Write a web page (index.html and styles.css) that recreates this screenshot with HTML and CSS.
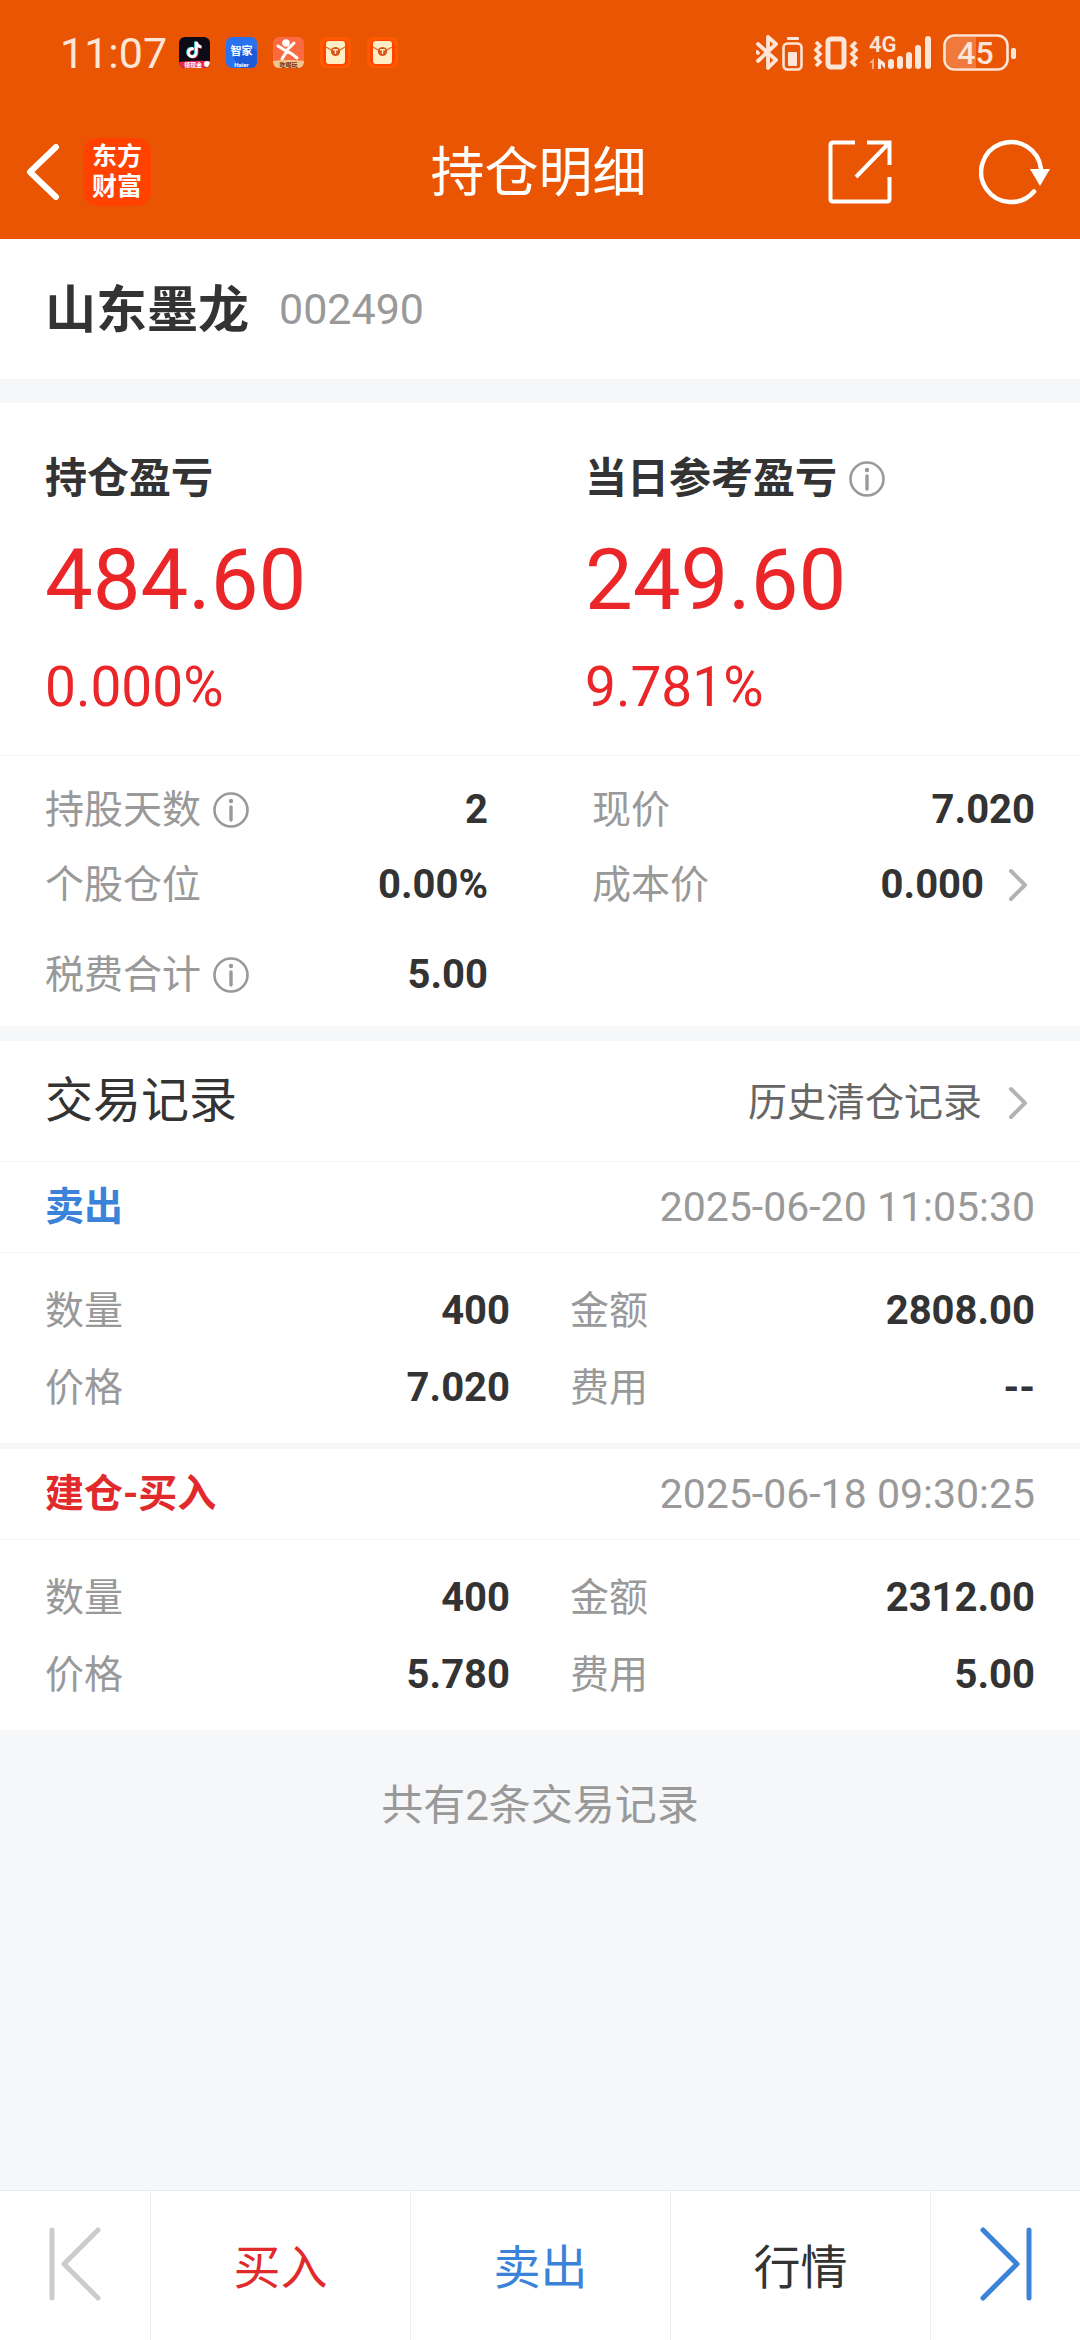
FILE: index.html
```html
<!DOCTYPE html>
<html lang="zh-CN">
<head>
<meta charset="utf-8">
<meta name="viewport" content="width=device-width, initial-scale=1">
<title>持仓明细</title>
<link rel="stylesheet" href="styles.css">
</head>
<body>
<svg class="defs" aria-hidden="true">
  <symbol id="info" viewBox="0 0 36 36">
    <circle cx="18" cy="18" r="16.5" fill="none" stroke="#999" stroke-width="2.6"/>
    <circle cx="18" cy="9" r="2.2" fill="#999"/>
    <path d="M18 15v13" stroke="#999" stroke-width="3.4" stroke-linecap="round"/>
  </symbol>
  <symbol id="chevron" viewBox="0 0 20 34">
    <path d="M3 3l14 14L3 31" fill="none" stroke="#b3b3b3" stroke-width="4" stroke-linecap="round" stroke-linejoin="round"/>
  </symbol>
  <symbol id="envelope" viewBox="0 0 31 31">
    <rect width="31" height="31" rx="6" fill="#ff5a00"/>
    <rect x="3" y="3" width="25" height="26" rx="7" fill="#ff4400"/>
    <rect x="6" y="4" width="19" height="23" rx="3" fill="#ffedc4"/>
    <path d="M6 10l7 4h5l7-4" fill="none" stroke="#e0701a" stroke-width="1.3"/>
    <circle cx="15.500" cy="14.500" r="4.600" fill="#d9541c"/>
    <path d="M13 12.800h5M15.500 13v4" stroke="#ffedc4" stroke-width="1.400"/>
  </symbol>
</svg>

<header class="top">
  <div class="status">
    <span class="clock">11:07</span>
    <div class="apps">
      <svg class="app" viewBox="0 0 31 31">
        <defs><clipPath id="r"><rect width="31" height="31" rx="6"/></clipPath></defs>
        <g clip-path="url(#r)">
          <rect width="31" height="31" fill="#0d0c16"/>
          <g fill="none" stroke-width="2.800">
            <path d="M14 11.500a4 4 0 1 0 2.500 4V4.500c.5 3 2.500 4.600 5 4.800" stroke="#25e6e0"/>
            <path d="M15.500 12.500a4 4 0 1 0 2.500 4V5.500c.5 3 2.500 4.600 5 4.800" stroke="#f3315a"/>
            <path d="M14.800 12a4 4 0 1 0 2.500 4V5c.5 3 2.500 4.600 5 4.800" stroke="#fff"/>
          </g>
          <path d="M0 25q15-2 31-1v7H0z" fill="#e62a4f"/>
          <text x="5" y="30" font-size="6" font-weight="700" fill="#fff">领现金</text>
          <circle cx="28" cy="27" r="3" fill="#fff"/>
        </g>
      </svg>
      <svg class="app" viewBox="0 0 31 31">
        <rect width="31" height="31" rx="6" fill="#2a72f0"/>
        <path d="M26 9l5 5v11a6 6 0 0 1-6 6H15l-8-11z" fill="#1e5ad8"/>
        <text x="15.500" y="18" font-size="11" font-weight="700" fill="#fff" text-anchor="middle">智家</text>
        <text x="15.500" y="30" font-size="6" font-weight="700" fill="#fff" text-anchor="middle">Haier</text>
      </svg>
      <svg class="app" viewBox="0 0 31 31">
        <g clip-path="url(#r)">
          <rect width="31" height="31" fill="#fb6a40"/>
          <circle cx="13" cy="6" r="3.800" fill="#fff"/>
          <path d="M5 9l8 5 8-8M14 14l-5 8M14 14l5 3 5 4" fill="none" stroke="#fff" stroke-width="3" stroke-linecap="round" stroke-linejoin="round"/>
          <path d="M0 24q15-2 31 0v7H0z" fill="#f2c58d"/>
          <text x="15.500" y="30" font-size="6" font-weight="700" fill="#6b2d12" text-anchor="middle">吃喝玩</text>
        </g>
      </svg>
      <svg class="app"><use href="#envelope"/></svg>
      <svg class="app"><use href="#envelope"/></svg>
    </div>
    <svg class="signals" viewBox="0 0 262 42" role="img" aria-label="蓝牙 振动 4G 电量45">
      <g fill="none" stroke="#fde5d8">
        <path d="M2 12l18 16-8 8V5l8 7L2 29M1 20l1 1" stroke-width="3.800" stroke-linejoin="round" stroke-linecap="round"/>
        <rect x="27.500" y="11.500" width="18" height="26" rx="4" stroke-width="2.600"/>
        <rect x="72" y="7" width="16" height="28" rx="3" stroke-width="5"/>
        <path d="M60 10l4 4-4 4 4 4-4 4 4 4-4 4M100 10l-4 4 4 4-4 4 4 4-4 4 4 4" stroke-width="3.600"/>
        <rect x="188.500" y="3.500" width="63" height="34" rx="10" stroke-width="2.600"/>
      </g>
      <path d="M200 5h20v31h-20q-10 0-10-10V15q0-10 10-10z" fill="#f28a54" opacity=".7"/>
      <g fill="#fde5d8">
        <rect x="31" y="5" width="12" height="3" rx="1"/>
        <rect x="32" y="20" width="9" height="14" rx="1"/>
        <rect x="132" y="27" width="6" height="10" rx="3"/>
        <rect x="141" y="24" width="6" height="13" rx="3"/>
        <rect x="150" y="20" width="6" height="17" rx="3"/>
        <rect x="159" y="13" width="6" height="24" rx="3"/>
        <rect x="169" y="4" width="6" height="33" rx="3"/>
        <rect x="255" y="16" width="5" height="11" rx="2"/>
        <path d="M122 26v11h3v-5l4 5v-6l-4-3z"/>
        <text x="113" y="20" font-size="22" font-weight="600">4G</text>
        <text x="219.500" y="32" font-size="32" font-weight="500" text-anchor="middle">45</text>
      </g>
      <path d="M113 31l5-5v11h-2v-6z" fill="#f7ab85"/>
    </svg>
  </div>
  <div class="bar">
    <div class="bar-left">
      <button class="icon-btn" aria-label="返回">
        <svg width="34" height="56" viewBox="0 0 34 56"><path d="M30 3L4 28l26 25" fill="none" stroke="#fff" stroke-width="6" stroke-linecap="round" stroke-linejoin="round"/></svg>
      </button>
      <span class="logo">东方<br>财富</span>
    </div>
    <h1 class="title">持仓明细</h1>
    <div class="bar-right">
      <button class="icon-btn" aria-label="分享">
        <svg width="64" height="64" viewBox="0 0 64 64"><path d="M27 2.500H5Q2.500 2.500 2.500 5v54q0 2.500 2.500 2.500h54q2.500 0 2.500-2.500V37M39 2.500h22.500V25M61 3L28 37" fill="none" stroke="#fff" stroke-width="4"/></svg>
      </button>
      <button class="icon-btn" aria-label="刷新">
        <svg width="72" height="66" viewBox="0 0 72 66"><path d="M62 30A30 30 0 1 0 55 52.500" fill="none" stroke="#fff" stroke-width="4.500" stroke-linecap="round"/><path d="M51 30h20L61 47z" fill="#fff"/></svg>
      </button>
    </div>
  </div>
</header>

<main>
  <section class="stock">
    <h2 class="stock-name">山东墨龙</h2>
    <span class="stock-code">002490</span>
  </section>

  <section class="profit">
    <div>
      <h3 class="profit-head">持仓盈亏</h3>
      <p class="profit-value">484.60</p>
      <p class="profit-rate">0.000%</p>
    </div>
    <div>
      <h3 class="profit-head">当日参考盈亏<svg class="info"><use href="#info"/></svg></h3>
      <p class="profit-value">249.60</p>
      <p class="profit-rate">9.781%</p>
    </div>
  </section>

  <dl class="facts">
    <div class="pair"><dt>持股天数<svg class="info"><use href="#info"/></svg></dt><dd>2</dd></div>
    <div class="pair"><dt>现价</dt><dd>7.020</dd></div>
    <div class="pair"><dt>个股仓位</dt><dd>0.00%</dd></div>
    <div class="pair"><dt>成本价</dt><dd>0.000<svg class="chevron"><use href="#chevron"/></svg></dd></div>
    <div class="pair last"><dt>税费合计<svg class="info"><use href="#info"/></svg></dt><dd>5.00</dd></div>
  </dl>

  <section class="records">
    <div class="records-head">
      <h2 class="records-title">交易记录</h2>
      <a class="history" href="#">历史清仓记录<svg class="chevron"><use href="#chevron"/></svg></a>
    </div>
    <article class="record">
      <div class="record-head"><h3 class="kind sell">卖出</h3><time>2025-06-20 11:05:30</time></div>
      <dl class="record-body">
        <div class="pair"><dt>数量</dt><dd>400</dd></div>
        <div class="pair"><dt>金额</dt><dd>2808.00</dd></div>
        <div class="pair"><dt>价格</dt><dd>7.020</dd></div>
        <div class="pair"><dt>费用</dt><dd>--</dd></div>
      </dl>
    </article>
    <article class="record">
      <div class="record-head"><h3 class="kind buy">建仓-买入</h3><time>2025-06-18 09:30:25</time></div>
      <dl class="record-body">
        <div class="pair"><dt>数量</dt><dd>400</dd></div>
        <div class="pair"><dt>金额</dt><dd>2312.00</dd></div>
        <div class="pair"><dt>价格</dt><dd>5.780</dd></div>
        <div class="pair"><dt>费用</dt><dd>5.00</dd></div>
      </dl>
    </article>
  </section>
  <p class="total">共有2条交易记录</p>
</main>

<nav class="actions">
  <button class="action step" aria-label="上一只" disabled>
    <svg width="52" height="74" viewBox="0 0 52 74"><path d="M3 3v68M49 3L15 37l34 34" fill="none" stroke="#ccc" stroke-width="5" stroke-linecap="round" stroke-linejoin="round"/></svg>
  </button>
  <button class="action buy">买入</button>
  <button class="action sell">卖出</button>
  <button class="action">行情</button>
  <button class="action step" aria-label="下一只">
    <svg width="52" height="74" viewBox="0 0 52 74"><path d="M49 3v68M3 3l34 34L3 71" fill="none" stroke="#3b82d9" stroke-width="5" stroke-linecap="round" stroke-linejoin="round"/></svg>
  </button>
</nav>
</body>
</html>
```
FILE: styles.css
```css
* {
  box-sizing: border-box;
  margin: 0;
  padding: 0;
}

body {
  display: flex;
  flex-direction: column;
  min-height: 100vh;
  background: #f6f7f9;
  color: #333;
  font-family: Roboto, "Noto Sans CJK SC", sans-serif;
  font-size: 39px;
  line-height: 56px;
}

h1, h2, h3 {
  font-weight: 400;
}

button {
  border: 0;
  background: none;
  color: inherit;
  font: inherit;
}

a {
  color: inherit;
  text-decoration: none;
}

svg {
  display: block;
  flex: none;
}

.defs {
  position: absolute;
  width: 0;
  height: 0;
}

/* Orange header */
.top {
  background: #e95502;
  color: #fff;
}

.status {
  display: flex;
  align-items: center;
  height: 105px;
  padding: 0 62px 0 60px;
}

.clock {
  width: 119px;
  color: #fde5d8;
  font-size: 43px;
}

.apps {
  display: flex;
  gap: 16px;
}

.app {
  width: 31px;
  height: 31px;
}

.signals {
  width: 262px;
  height: 42px;
  margin-left: auto;
}

.bar {
  display: grid;
  grid-template-columns: 1fr auto 1fr;
  align-items: center;
  height: 134px;
  padding: 0 29px 0 26px;
}

.bar-left,
.bar-right {
  display: flex;
  align-items: center;
}

.bar-left {
  gap: 23px;
}

.bar-right {
  justify-content: flex-end;
  gap: 87px;
}

.logo {
  width: 68px;
  height: 68px;
  padding: 4px 0;
  border-radius: 14px;
  background: #ff4200;
  font-size: 25px;
  font-weight: 700;
  line-height: 30px;
  text-align: center;
}

.title {
  padding-top: 4px;
  font-size: 54px;
  line-height: 80px;
}

/* Stock name */
.stock {
  display: flex;
  align-items: center;
  gap: 30px;
  height: 140px;
  padding: 0 45px;
  background: #fff;
}

.stock-name {
  padding-top: 4px;
  font-size: 51px;
  font-weight: 700;
}

.stock-code {
  color: #999;
  font-size: 43px;
}

/* Profit figures */
.profit {
  display: grid;
  grid-template-columns: 1fr 1fr;
  margin-top: 24px;
  padding: 46px 0 32px;
  border-bottom: 1px solid #f3f4f6;
  background: #fff;
}

.profit > div {
  padding-left: 45px;
}

.profit-head {
  display: flex;
  align-items: center;
  gap: 12px;
  font-size: 42px;
  font-weight: 700;
  line-height: 60px;
}

.profit-value,
.profit-rate {
  color: #ea2629;
}

.profit-value {
  padding-top: 16px;
  font-size: 85px;
  line-height: 110px;
}

.profit-rate {
  padding-top: 16px;
  font-size: 55px;
  line-height: 72px;
}

.info {
  width: 36px;
  height: 36px;
}

.chevron {
  width: 20px;
  height: 34px;
}

/* Label and value pairs */
.facts,
.record-body {
  display: grid;
  align-items: center;
  background: #fff;
}

.facts {
  grid-template-columns: 1fr 1fr;
  column-gap: 104px;
  grid-template-rows: 75px 75px 90px;
  padding: 16px 45px 14px;
}

.pair {
  display: flex;
  align-items: baseline;
  justify-content: space-between;
}

.last {
  padding-top: 15px;
}

.pair dt {
  display: flex;
  align-items: center;
  gap: 12px;
  color: #999;
}

.pair dd {
  display: flex;
  align-items: center;
  gap: 24px;
  font-size: 40px;
  font-weight: 700;
}

.pair .chevron,
.history .chevron {
  margin-right: 7px;
}

/* Trade records */
.records {
  margin-top: 15px;
}

.records-head {
  display: flex;
  align-items: center;
  justify-content: space-between;
  height: 121px;
  padding: 0 45px;
  border-bottom: 1px solid #f3f4f6;
  background: #fff;
}

.records-title {
  font-size: 48px;
}

.history {
  display: flex;
  align-items: center;
  gap: 26px;
  padding-top: 4px;
  color: #666;
}

.record + .record {
  margin-top: 6px;
}

.record-head {
  display: flex;
  align-items: center;
  justify-content: space-between;
  height: 91px;
  padding: 0 45px;
  border-bottom: 1px solid #f3f4f6;
  background: #fff;
}

.record-head time {
  color: #999;
  font-size: 41px;
}

.kind {
  font-size: 39px;
  font-weight: 700;
}

.sell {
  color: #3b82d9;
}

.buy {
  color: #e12a2c;
}

.record-body {
  grid-template-columns: 1fr 1fr;
  column-gap: 60px;
  grid-auto-rows: 77px;
  padding: 19px 45px 17px;
}

.total {
  padding: 46px 0;
  color: #999;
  font-size: 42px;
  line-height: 60px;
  text-align: center;
}

/* Bottom actions */
.actions {
  display: grid;
  grid-template-columns: 150fr 260fr 260fr 260fr 150fr;
  height: 150px;
  margin-top: auto;
  border-top: 1px solid #e8eaed;
  background: #fff;
}

.action {
  display: flex;
  align-items: center;
  justify-content: center;
  padding-top: 4px;
  font-size: 47px;
}

.step {
  padding: 0 0 4px;
}

.action + .action {
  border-left: 1px solid #eceef0;
}
```
